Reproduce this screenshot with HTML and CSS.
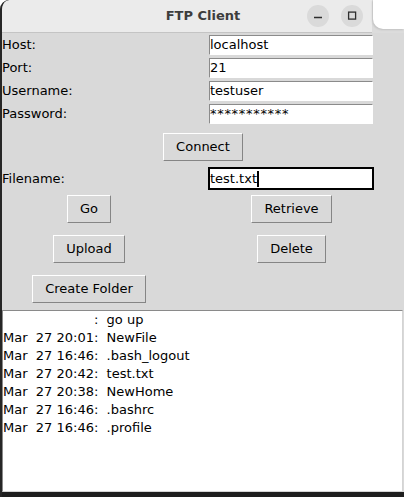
FILE: index.html
```html
<!DOCTYPE html>
<html>
<head>
<meta charset="utf-8">
<title>FTP Client</title>
<link rel="stylesheet" href="styles.css">
</head>
<body>
<div class="screen">
  <header class="titlebar">
    <div></div>
    <div class="title">FTP Client</div>
    <div class="controls">
      <span class="ctl"><svg width="22" height="22" viewBox="0 0 22 22"><line x1="7" y1="12.5" x2="15" y2="12.5" stroke="#2e2e2e" stroke-width="1.4"/></svg></span>
      <span class="ctl"><svg width="22" height="22" viewBox="0 0 22 22"><rect x="7.6" y="7.1" width="7" height="7" fill="none" stroke="#2e2e2e" stroke-width="1.3"/></svg></span>
      <span class="ctl"><svg width="22" height="22" viewBox="0 0 22 22"><path d="M7.5 7.5 L14.5 14.5 M14.5 7.5 L7.5 14.5" stroke="#2e2e2e" stroke-width="1.4"/></svg></span>
    </div>
  </header>
  <div class="overlay"><div class="other"></div></div>
  <main class="content">
    <div class="form">
      <span class="lbl">Host:</span><div class="entry">localhost</div>
      <span class="lbl">Port:</span><div class="entry">21</div>
      <span class="lbl">Username:</span><div class="entry">testuser</div>
      <span class="lbl">Password:</span><div class="entry pw">***********</div>
    </div>
    <div class="center-row"><button class="btn">Connect</button></div>
    <div class="form file-row">
      <span class="lbl">Filename:</span><div class="entry focus">test.txt<span class="caret"></span></div>
    </div>
    <div class="btnrow first"><button class="btn">Go</button><button class="btn">Retrieve</button></div>
    <div class="btnrow"><button class="btn">Upload</button><button class="btn">Delete</button></div>
    <div class="btnrow"><button class="btn">Create Folder</button></div>
    <div class="listbox">
      <div class="item">                      :  go up</div>
      <div class="item">Mar  27 20:01:  NewFile</div>
      <div class="item">Mar  27 16:46:  .bash_logout</div>
      <div class="item">Mar  27 20:42:  test.txt</div>
      <div class="item">Mar  27 20:38:  NewHome</div>
      <div class="item">Mar  27 16:46:  .bashrc</div>
      <div class="item">Mar  27 16:46:  .profile</div>
    </div>
  </main>
</div>
</body>
</html>
```

FILE: styles.css
```css
html, body {
  margin: 0;
  padding: 0;
}
body {
  width: 404px;
  height: 497px;
  overflow: hidden;
  background: #ffffff;
  font-family: "DejaVu Sans", sans-serif;
  font-size: 13px;
  color: #000;
}
.screen {
  position: relative;
  box-sizing: border-box;
  width: 404px;
  height: 497px;
  border-left: 2px solid #262626;
  border-top-left-radius: 9px;
  background: #1e1e1e;
  padding-bottom: 5px;
  display: flex;
  flex-direction: column;
  overflow: hidden;
}
.titlebar {
  height: 32px;
  flex: none;
  background: #ebebeb;
  border-bottom: 1px solid #c4c4c4;
  border-top-left-radius: 7px;
  display: grid;
  grid-template-columns: 1fr auto 1fr;
  align-items: center;
}
.title {
  font-family: "DejaVu Sans", sans-serif;
  font-weight: bold;
  font-size: 13px;
  line-height: 32px;
  color: #3d3d3d;
}
.controls {
  justify-self: end;
  display: flex;
  gap: 12px;
  padding-right: 7px;
}
.ctl {
  width: 22px;
  height: 22px;
  border-radius: 50%;
  background: #dadada;
  display: block;
}
.ctl svg {
  display: block;
}
.overlay {
  position: absolute;
  top: 0;
  right: 0;
  width: 32px;
  height: 33px;
  background: #dcdcdc;
}
.other {
  height: 29px;
  margin-left: 1px;
  background: #ffffff;
  border-bottom-left-radius: 10px;
  box-shadow: -1px 1px 2px rgba(0,0,0,0.12);
}
.content {
  flex: 1;
  background: #d9d9d9;
  display: flex;
  flex-direction: column;
  overflow: hidden;
  min-height: 0;
}
.form {
  display: grid;
  grid-template-columns: 206px 166px;
  grid-auto-rows: 22px;
  row-gap: 1px;
  padding-top: 1px;
  align-items: center;
}
.lbl {
  line-height: 18px;
}
.entry {
  box-sizing: border-box;
  width: 164px;
  height: 20px;
  margin: 1px;
  background: #fff;
  border: 1px solid;
  border-color: #8b8b8b #ffffff #ffffff #8b8b8b;
  line-height: 18px;
  white-space: pre;
  overflow: hidden;
}
.entry.pw {
  letter-spacing: 0.7px;
}
.file-row {
  margin-top: 5px;
  grid-auto-rows: 23px;
  padding-top: 0;
}
.entry.focus {
  width: 166px;
  height: 23px;
  margin: 0;
  border: 2px solid #000;
  line-height: 19px;
}
.caret {
  display: inline-block;
  width: 2px;
  height: 16px;
  background: #000;
  vertical-align: -4px;
}
.center-row {
  margin-top: 7px;
  display: flex;
  justify-content: center;
}
.btn {
  font-family: "DejaVu Sans", sans-serif;
  font-size: 13px;
  line-height: 16px;
  color: #000;
  background: #d9d9d9;
  border: 1px solid;
  border-color: #ffffff #858585 #858585 #ffffff;
  padding: 5px 12px;
  margin: 1px;
  border-radius: 0;
}
.btnrow {
  display: grid;
  grid-template-columns: 174px 231px;
  justify-items: center;
  margin-top: 10px;
}
.btnrow.first {
  margin-top: 4px;
}
.listbox {
  margin-top: 6px;
  flex: 1;
  width: 401px;
  box-sizing: border-box;
  background: #fff;
  border: 1px solid;
  border-color: #8a8a8a #d4d4d4 #d4d4d4 #8a8a8a;
  line-height: 18px;
}
.item {
  height: 18px;
  white-space: pre;
}
```
